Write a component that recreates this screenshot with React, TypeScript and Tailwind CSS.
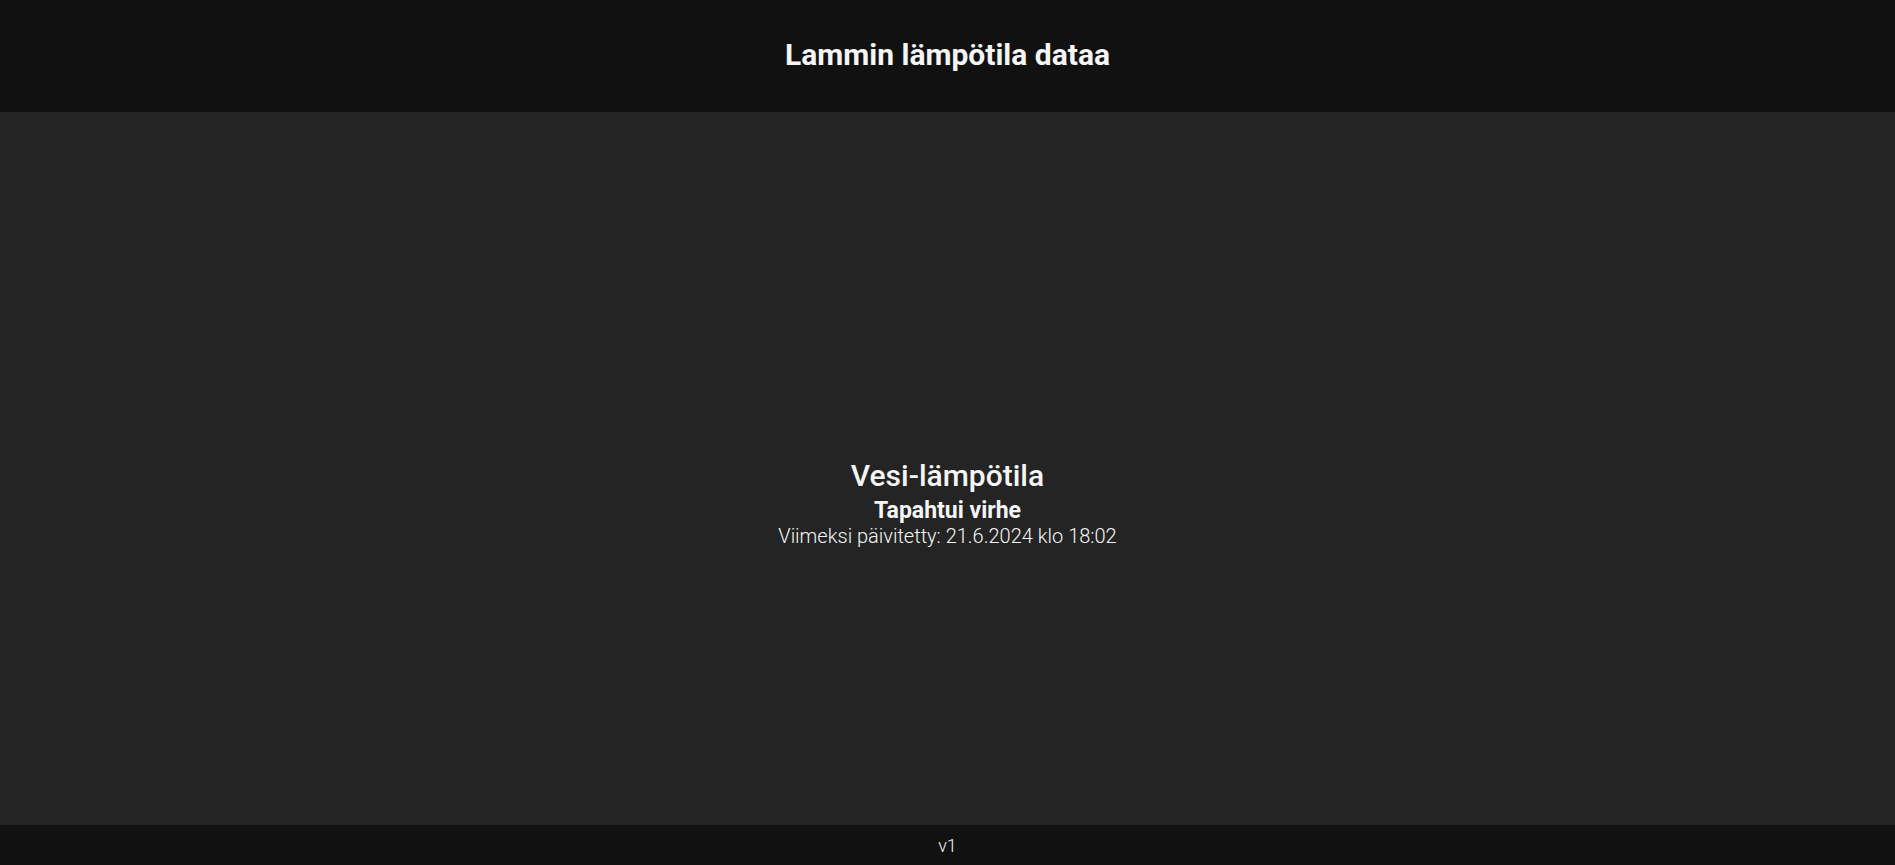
export default function App() {
  return (
    <div className="flex h-[865px] flex-col bg-[#242424] font-['Roboto',sans-serif] text-[#f5f5f5]">
      <header className="flex h-[112px] items-center justify-center bg-[#111111]">
        <h1 className="pb-[2px] text-[30px] font-bold leading-none">Lammin lämpötila dataa</h1>
      </header>

      <main className="flex flex-1 flex-col items-center justify-center pt-[72px] text-center">
        <h2 className="text-[30px] font-medium leading-[30px]">Vesi-lämpötila</h2>
        <p className="mt-2 text-[23px] font-bold leading-[23px]">Tapahtui virhe</p>
        <p className="mt-[2px] text-[20px] font-light leading-[24px]">
          Viimeksi päivitetty: 21.6.2024 klo 18:02
        </p>
      </main>

      <footer className="flex h-[40px] items-center justify-center bg-[#111111]">
        <span className="text-[18px] font-light">v1</span>
      </footer>
    </div>
  );
}
